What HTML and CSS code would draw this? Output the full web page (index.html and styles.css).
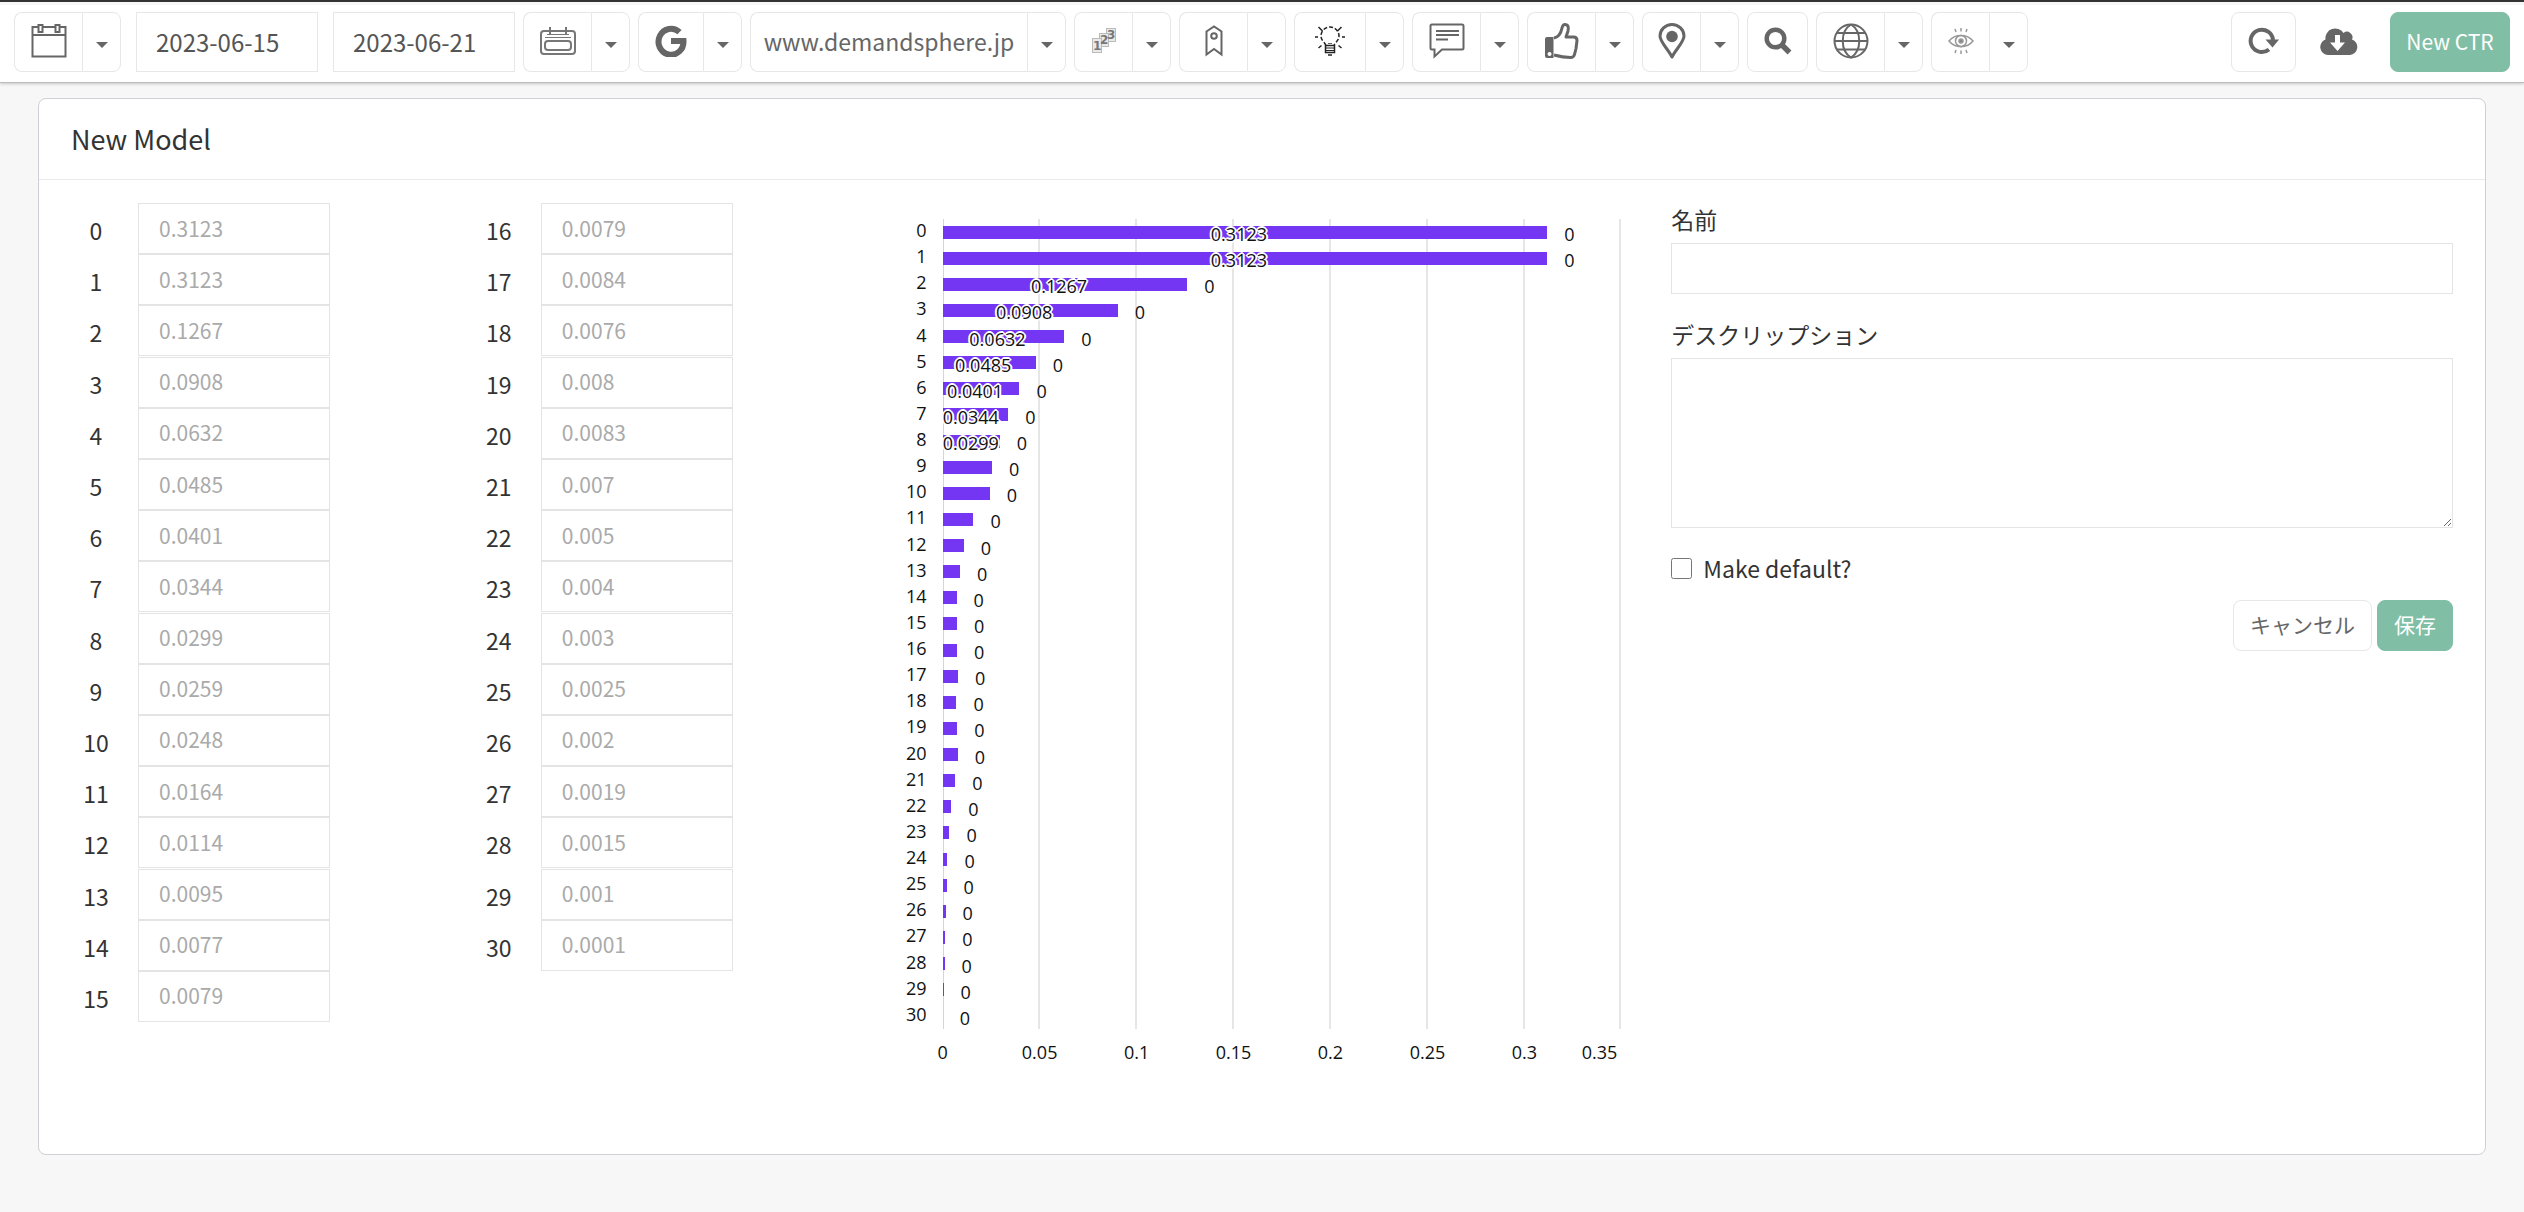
FILE: index.html
```html
<!doctype html>
<html lang="ja">
  <head>
    <meta charset="utf-8" />
    <title>New Model</title>
    <link rel="stylesheet" href="styles.css">
  </head>
  <body>
    <header class="toolbar">
      <div class="btn-group">
        <button class="btn icon-btn" aria-label="Date range">
          <svg width="36" height="34" viewBox="0 0 36 34" fill="none" stroke="#666" stroke-width="2">
            <path d="M7 3H1.500v29.500h33V3H29M12 3h12M1.500 11h33" />
            <path d="M7.500 1h4v7h-4zM24.500 1h4v7h-4z" />
          </svg>
        </button>
        <button class="btn caret-btn" aria-label="More date ranges"><span class="caret"></span></button>
      </div>
      <input type="text" class="date-input" value="2023-06-15" aria-label="From">
      <input type="text" class="date-input date-to" value="2023-06-21" aria-label="To">

      <div class="btn-group">
        <button class="btn icon-btn" aria-label="Compare dates">
          <svg width="36" height="30" viewBox="0 0 36 30" fill="none" stroke="#777">
            <rect x="1" y="5" width="34" height="23" rx="3" stroke-width="2" />
            <path d="M10 1v7M26 1v7" stroke-width="2" />
            <path d="M5 11.500h26M7 8.500h22" />
            <rect x="5" y="15" width="26" height="9" rx="3" stroke-width="2" />
          </svg>
        </button>
        <button class="btn caret-btn" aria-label="More comparisons"><span class="caret"></span></button>
      </div>

      <div class="btn-group">
        <button class="btn icon-btn icon-md" aria-label="Google">
          <svg width="32" height="32" viewBox="0 0 32 32" fill="none" stroke="#666" stroke-width="6">
            <path d="M24.500 7.200A12.500 13 0 1 0 28.500 16H16" />
          </svg>
        </button>
        <button class="btn caret-btn" aria-label="More engines"><span class="caret"></span></button>
      </div>

      <div class="btn-group">
        <button class="btn site-btn">www.demandsphere.jp</button>
        <button class="btn caret-btn" aria-label="More sites"><span class="caret"></span></button>
      </div>

      <div class="btn-group">
        <button class="btn icon-btn icon-sm" aria-label="Rank">
          <svg width="26" height="26" viewBox="0 0 26 26">
            <g fill="#e9e9e9" stroke="#bbb">
              <rect x="15.500" y=".5" width="9" height="13" />
              <rect x="8.500" y="5.500" width="9" height="13" />
              <rect x="1.500" y="10.500" width="9" height="14" />
            </g>
            <g class="rank-digits">
              <text x="16" y="11">3</text>
              <text x="9" y="16">2</text>
              <text x="2" y="22">1</text>
            </g>
          </svg>
        </button>
        <button class="btn caret-btn" aria-label="More ranks"><span class="caret"></span></button>
      </div>

      <div class="btn-group">
        <button class="btn icon-btn" aria-label="Bookmarks">
          <svg width="18" height="32" viewBox="0 0 18 32" fill="none" stroke="#666" stroke-width="2">
            <path d="M1.500 29.500V6.500L9 1.500l7.500 5v23L9 24z" />
            <circle cx="9" cy="11" r="2.800" />
          </svg>
        </button>
        <button class="btn caret-btn" aria-label="More bookmarks"><span class="caret"></span></button>
      </div>

      <div class="btn-group">
        <button class="btn icon-btn icon-lg" aria-label="Ideas">
          <svg width="30" height="30" viewBox="0 0 30 30" fill="none" stroke="#222">
            <path d="M11 19.500c-1-3-5-5-5-9.500a9 9 0 0 1 18 0c0 4.500-4 6.500-5 9.500" stroke-width="1.500" stroke-dasharray="4 2" />
            <path d="M0 11h3M27 11h3M3.500 1l4 4M26.500 1l-4 4M3.500 22l3-2.500M26.500 22l-3-2.500" stroke-width="1.500" />
            <path d="M13 17.500h4" stroke="#666" />
            <path d="M10.500 19.500h9v7h-9z" stroke-width="1.500" />
            <path d="M11 22h8M11 24.500h8" />
            <path d="M13 29h4" stroke-width="1.500" />
          </svg>
        </button>
        <button class="btn caret-btn" aria-label="More ideas"><span class="caret"></span></button>
      </div>

      <div class="btn-group">
        <button class="btn icon-btn" aria-label="Notes">
          <svg width="36" height="36" viewBox="0 0 36 36" fill="none" stroke="#666" stroke-width="2">
            <path d="M3 1.500h30q1.500 0 1.500 1.500v22q0 1.500-1.500 1.500H13L5.500 33.500v-7H3q-1.500 0-1.500-1.500V3q0-1.500 1.500-1.500z" />
            <path d="M7 8h23M7 12h23M7 16.500h12" />
          </svg>
        </button>
        <button class="btn caret-btn" aria-label="More notes"><span class="caret"></span></button>
      </div>

      <div class="btn-group">
        <button class="btn icon-btn" aria-label="Likes">
          <svg width="34" height="36" viewBox="0 0 34 36" fill="none" stroke="#666" stroke-width="3" stroke-linejoin="round">
            <path d="M9 15c5-1 7-5 8-10 .5-2.500 1.500-3.500 3-3.500 3 0 4 3 3 6.500l-2 6h7.500c2.500 0 3.500 1.500 3.500 3.500l-1 8-1.500 6c-.5 2-2 3-4 3-7 0-11-1-16.500-2.500" />
            <path fill="#666" stroke="none" fill-rule="evenodd" d="M2 14h6.500v21H2q-2 0-2-2V16q0-2 2-2zM4.500 29a2 2 0 1 0 .1 0z" />
          </svg>
        </button>
        <button class="btn caret-btn" aria-label="More likes"><span class="caret"></span></button>
      </div>

      <div class="btn-group">
        <button class="btn icon-btn icon-sm" aria-label="Location">
          <svg width="28" height="36" viewBox="0 0 28 36">
            <path fill="none" stroke="#666" stroke-width="3" stroke-linejoin="round" d="M14 34C10 26 2 19 2 13a12 11.500 0 0 1 24 0c0 6-8 13-12 21z" />
            <circle cx="14" cy="13.500" r="5.800" fill="#666" />
          </svg>
        </button>
        <button class="btn caret-btn" aria-label="More locations"><span class="caret"></span></button>
      </div>

      <button class="btn icon-btn icon-single" aria-label="Search">
        <svg width="28" height="28" viewBox="0 0 28 28" fill="none" stroke="#666">
          <circle cx="11.500" cy="11.500" r="8.800" stroke-width="4.500" />
          <path d="M18 18l7.500 7.500" stroke-width="5.500" />
        </svg>
      </button>

      <div class="btn-group">
        <button class="btn icon-btn" aria-label="Language">
          <svg width="36" height="36" viewBox="0 0 36 36" fill="none" stroke="#666" stroke-width="2">
            <circle cx="18" cy="18" r="16.500" />
            <path d="M18 1.500C7 8 7 28 18 34.500C29 28 29 8 18 1.500M4 10h28M1.500 18h33M4 26.500h28" />
          </svg>
        </button>
        <button class="btn caret-btn" aria-label="More languages"><span class="caret"></span></button>
      </div>

      <div class="btn-group">
        <button class="btn icon-btn icon-sm" aria-label="Visibility">
          <svg width="26" height="26" viewBox="0 0 26 26" fill="none" stroke="#999" stroke-width="1.500">
            <path d="M1 13C7 5.500 19 5.500 25 13C19 20.500 7 20.500 1 13z" />
            <circle cx="13" cy="13" r="5.500" />
            <circle cx="13" cy="13" r="2" fill="#888" />
            <path d="M13 0v3.500M7 1l1 3M19 1l-1 3M13 22.500V26M7 25l1-3M19 25l-1-3" />
          </svg>
        </button>
        <button class="btn caret-btn" aria-label="More visibility options"><span class="caret"></span></button>
      </div>

      <div class="toolbar-right">
        <button class="btn refresh-btn" aria-label="Refresh">
          <svg width="32" height="28" viewBox="0 0 32 28">
            <path fill="none" stroke="#666" stroke-width="4" d="M21 22.500A11.200 11.200 0 1 1 25 13" />
            <path fill="#666" d="M17.500 12.500h13.500l-6.500 8z" />
          </svg>
        </button>
        <button class="btn cloud-btn" aria-label="Download">
          <svg width="38" height="28" viewBox="0 0 38 28">
            <path fill="#666" d="M8 28a8 8 0 0 1-2.500-15.500A9.800 9.800 0 0 1 23.500 6a5.500 5.500 0 0 1 8.500 6.500A8 8 0 0 1 30 28z" />
            <path fill="#fff" d="M15 8h5v7.500h5L17.500 24 10 15.500h5z" />
          </svg>
        </button>
        <button class="btn btn-primary new-btn">New CTR</button>
      </div>
    </header>

    <main class="card">
      <h1 class="card-title">New Model</h1>
      <div class="card-body">
        <div class="fields" id="fieldsLeft"></div>
        <div class="fields" id="fieldsRight"></div>

        <div class="chart">
          <div class="plot">
            <div class="grid-lines">
              <span></span><span></span><span></span><span></span><span></span><span></span><span></span>
            </div>
            <div class="bars" id="bars"></div>
          </div>
          <div class="x-axis">
            <span>0</span>
            <span>0.05</span>
            <span>0.1</span>
            <span>0.15</span>
            <span>0.2</span>
            <span>0.25</span>
            <span>0.3</span>
            <span>0.35</span>
          </div>
        </div>

        <form class="model-form">
          <label for="modelName">名前</label>
          <input type="text" id="modelName" class="text-input">
          <label for="modelDescription">デスクリップション</label>
          <textarea id="modelDescription" class="text-input"></textarea>
          <div class="check-row">
            <input type="checkbox" id="makeDefault">
            <label for="makeDefault">Make default?</label>
          </div>
          <div class="form-actions">
            <button type="button" class="btn action-btn">キャンセル</button>
            <button type="submit" class="btn btn-primary action-btn">保存</button>
          </div>
        </form>
      </div>
    </main>

    <script src="model.js"></script>
  </body>
</html>
```

FILE: styles.css
```css
* {
  box-sizing: border-box;
}
body {
  margin: 0;
  border-top: 2px solid #333;
  background: #f7f7f7;
  color: #333;
  font-family: 'Noto Sans CJK JP', sans-serif;
  font-size: 23px;
  line-height: 32px;
}
button,
input,
textarea {
  font-family: inherit;
}

/* Toolbar */
.toolbar {
  display: flex;
  align-items: center;
  gap: 8px;
  padding: 10px 14px;
  background: #fff;
  border-bottom: 1px solid #bbb;
  box-shadow: 0 1px 3px rgba(0, 0, 0, 0.2), inset 0 3px #f7f7f7;
}
.btn {
  display: flex;
  align-items: center;
  justify-content: center;
  padding: 0 0 2px;
  background: #fff;
  color: #666;
  border: 1px solid #e7e7e7;
  border-radius: 8px;
  cursor: pointer;
}
.btn:hover {
  background: #fafafa;
}
.btn-group {
  display: flex;
}
.btn-group .btn:first-child {
  border-right: none;
  border-radius: 8px 0 0 8px;
}
.btn-group .btn:last-child {
  border-radius: 0 8px 8px 0;
}
.toolbar .btn {
  height: 60px;
}
.icon-btn {
  width: 68px;
}
.icon-md {
  width: 65px;
}
.icon-sm {
  width: 58px;
}
.icon-lg {
  width: 71px;
}
.icon-single {
  width: 61px;
}
.caret-btn {
  width: 39px;
}
.caret {
  margin-top: 8px;
  border: 6px solid transparent;
  border-top-color: #666;
  border-bottom: none;
}
.site-btn {
  width: 277px;
  font-size: 23px;
}
.date-input {
  width: 182px;
  height: 60px;
  margin-left: 7px;
  padding: 0 19px 2px;
  border: 1px solid #e7e7e7;
  color: #555;
  font-size: 24px;
}
.rank-digits {
  fill: #777;
  font: bold 12px 'DejaVu Sans', sans-serif;
}
.toolbar-right {
  display: flex;
  margin-left: auto;
}
.refresh-btn {
  width: 65px;
}
.toolbar .cloud-btn {
  width: 86px;
  margin-right: 8px;
  border: none;
}
.btn-primary,
.btn-primary:hover {
  background: #80bfa5;
  border-color: #80bfa5;
  color: #fff;
}
.new-btn {
  width: 120px;
  font-size: 21px;
}

/* Model card */
.card {
  margin: 15px 38px 56px;
  background: #fff;
  border: 1px solid #ced0d6;
  border-radius: 8px;
}
.card-title {
  margin: 0;
  padding: 24px 32px;
  border-bottom: 1px solid #e9e9e9;
  font-size: 27px;
  font-weight: 400;
  line-height: 32px;
}
.card-body {
  display: grid;
  grid-template-columns: 1fr 1fr 2fr 2fr;
  column-gap: 12px;
  padding: 23px 32px 90px 33px;
}
.fields {
  display: grid;
  grid-template-rows: repeat(16, 1fr);
  align-self: start;
  min-height: 819px;
}
.field {
  display: flex;
  align-items: center;
  gap: 18px;
}
.field label {
  width: 48px;
  padding-top: 3px;
  text-align: center;
}
.field input {
  width: 192px;
  height: 51px;
  padding: 0 20px 2px;
  border: 1px solid #e4e4e4;
  font-size: 21px;
}
.field input::placeholder {
  color: #aaa;
}

/* CTR bar chart */
.chart {
  padding: 16px 38px 0 65px;
  color: #111;
  font-family: 'Open Sans', sans-serif;
  font-size: 18px;
  line-height: 24px;
}
.plot {
  position: relative;
  height: 810px;
}
.grid-lines {
  position: absolute;
  inset: 0;
  display: flex;
  border-left: 1px solid #ccd6eb;
}
.grid-lines span {
  flex: 1;
  border-right: 2px solid #e6e6e6;
}
.bars {
  position: relative;
  display: grid;
  grid-template-rows: repeat(31, 1fr);
  height: 100%;
}
.bar-row {
  display: flex;
  align-items: center;
  height: 26px;
}
.bar-label {
  width: 49px;
  margin-left: -65px;
  margin-right: 16px;
  padding-bottom: 4px;
  text-align: right;
}
.bar-track {
  flex: 1;
  display: flex;
  align-items: center;
}
.bar {
  display: flex;
  align-items: center;
  justify-content: safe center;
  flex: none;
  height: 15px;
  background: #7436f2;
  background-clip: padding-box;
  border: 1px solid transparent;
  border-left: none;
}
.bar-value {
  margin-right: 12px;
  padding-top: 4px;
  text-shadow: -1px -1px #fff, 1px -1px #fff, -1px 1px #fff, 1px 1px #fff, 0 2px #fff, 0 -2px #fff, 2px 0 #fff, -2px 0 #fff;
}
.bar-total {
  padding: 4px 0 0 16px;
}
.x-axis {
  display: flex;
  justify-content: space-between;
  padding-top: 11px;
}
.x-axis span {
  display: flex;
  justify-content: center;
  width: 0;
}
.x-axis span:last-child {
  justify-content: flex-end;
  margin-right: 4px;
  margin-left: -4px;
}

/* Name and description form */
.model-form {
  display: flex;
  flex-direction: column;
}
.model-form > label {
  padding-bottom: 8px;
}
.text-input {
  width: 100%;
  height: 51px;
  margin-bottom: 24px;
  padding: 0 20px;
  border: 1px solid #e4e4e4;
  font-size: 21px;
}
textarea.text-input {
  height: 170px;
  padding: 12px 20px;
}
.check-row {
  display: flex;
  align-items: center;
  gap: 11px;
}
.check-row input {
  width: 21px;
  height: 21px;
  margin: 0;
}
.form-actions {
  display: flex;
  justify-content: flex-end;
  gap: 5px;
  margin-top: 16px;
}
.action-btn {
  height: 51px;
  padding: 0 16px 3px;
  font-size: 21px;
}
```

FILE: model.js
```js
const ctr = [
  0.3123, 0.3123, 0.1267, 0.0908, 0.0632, 0.0485, 0.0401, 0.0344,
  0.0299, 0.0259, 0.0248, 0.0164, 0.0114, 0.0095, 0.0077, 0.0079,
  0.0079, 0.0084, 0.0076, 0.008, 0.0083, 0.007, 0.005, 0.004,
  0.003, 0.0025, 0.002, 0.0019, 0.0015, 0.001, 0.0001
];
const axisMax = 0.35;
// bars below this are too short to hold their value
const labelMin = 0.028;

const left = document.getElementById('fieldsLeft');
const right = document.getElementById('fieldsRight');
const bars = document.getElementById('bars');

ctr.forEach((value, rank) => {
  const column = rank < 16 ? left : right;
  column.insertAdjacentHTML('beforeend', `
    <div class="field">
      <label for="rank${rank}">${rank}</label>
      <input type="text" id="rank${rank}" placeholder="${value}">
    </div>`);

  const text = value > labelMin ? `<span class="bar-value">${value}</span>` : '';
  bars.insertAdjacentHTML('beforeend', `
    <div class="bar-row">
      <span class="bar-label">${rank}</span>
      <div class="bar-track">
        <div class="bar" style="width: ${value / axisMax * 100}%">${text}</div>
        <span class="bar-total">0</span>
      </div>
    </div>`);
});
```
